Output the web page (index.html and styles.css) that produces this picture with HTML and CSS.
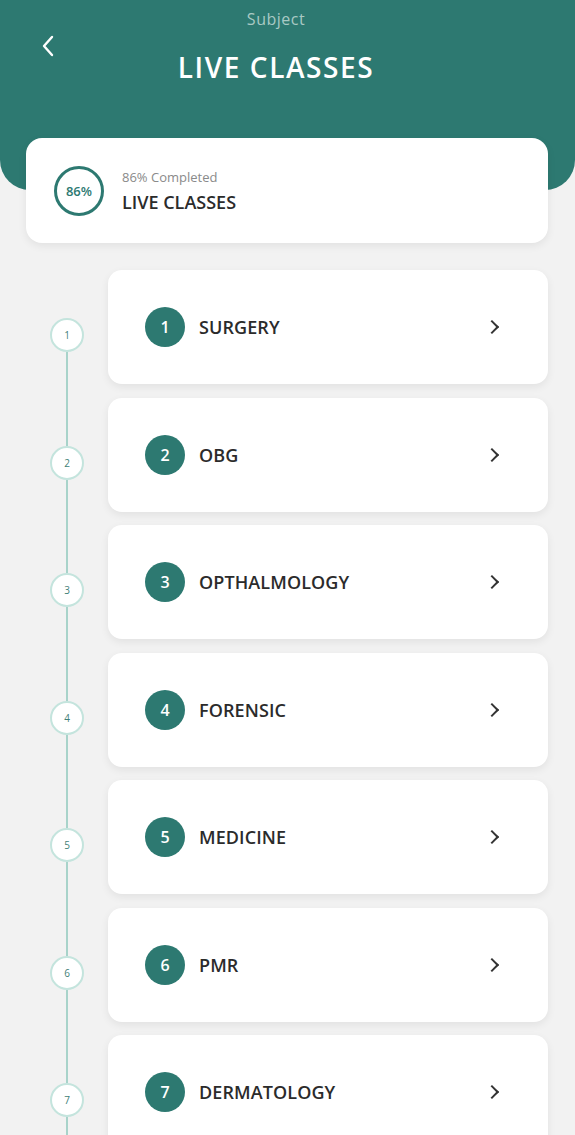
FILE: index.html
```html
<!DOCTYPE html>
<html lang="en">
<head>
    <meta charset="UTF-8">
    <meta name="viewport" content="width=device-width, initial-scale=1">
    <title>Live Classes</title>
    <link rel="stylesheet" href="styles.css">
</head>
<body>
    <div class="top">
        <div class="top_sub">Subject</div>
        <div class="top_row">
            <button type="button" class="button_back" aria-label="Back">
                <svg width="16" height="24" viewBox="0 0 16 24"><path d="M12 3 L4 12 L12 21" fill="none" stroke="#fff" stroke-width="2.4" stroke-linecap="round" stroke-linejoin="round"/></svg>
            </button>
            <h1 class="title">LIVE CLASSES</h1>
        </div>
    </div>

    <div class="summary">
        <div class="progress">86%</div>
        <div class="summary_text">
            <span class="summary_sub">86% Completed</span>
            <span class="summary_name">LIVE CLASSES</span>
        </div>
    </div>

    <ul class="list">
        <li class="row first">
            <div class="step"><span class="line"></span><span class="dot">1</span><span class="line"></span></div>
            <a class="item" href="#"><span class="badge">1</span><span class="name">SURGERY</span><span class="arrow"></span></a>
        </li>
        <li class="row">
            <div class="step"><span class="line"></span><span class="dot">2</span><span class="line"></span></div>
            <a class="item" href="#"><span class="badge">2</span><span class="name">OBG</span><span class="arrow"></span></a>
        </li>
        <li class="row">
            <div class="step"><span class="line"></span><span class="dot">3</span><span class="line"></span></div>
            <a class="item" href="#"><span class="badge">3</span><span class="name">OPTHALMOLOGY</span><span class="arrow"></span></a>
        </li>
        <li class="row">
            <div class="step"><span class="line"></span><span class="dot">4</span><span class="line"></span></div>
            <a class="item" href="#"><span class="badge">4</span><span class="name">FORENSIC</span><span class="arrow"></span></a>
        </li>
        <li class="row">
            <div class="step"><span class="line"></span><span class="dot">5</span><span class="line"></span></div>
            <a class="item" href="#"><span class="badge">5</span><span class="name">MEDICINE</span><span class="arrow"></span></a>
        </li>
        <li class="row">
            <div class="step"><span class="line"></span><span class="dot">6</span><span class="line"></span></div>
            <a class="item" href="#"><span class="badge">6</span><span class="name">PMR</span><span class="arrow"></span></a>
        </li>
        <li class="row">
            <div class="step"><span class="line"></span><span class="dot">7</span><span class="line"></span></div>
            <a class="item" href="#"><span class="badge">7</span><span class="name">DERMATOLOGY</span><span class="arrow"></span></a>
        </li>
    </ul>
</body>
</html>
```

FILE: styles.css
```css
body {
    margin: 0;
    background: #f2f2f2;
    font-family: "Open Sans", "Liberation Sans", sans-serif;
    color: #2b2b2b;
    overflow: hidden;
}

button {
    cursor: pointer;
}

.top {
    height: 190px;
    padding-right: 23px;
    background: #2d7971;
    border-radius: 0 0 30px 30px;
    color: #fff;
}

.top_sub {
    padding-top: 7px;
    text-align: center;
    font-size: 16px;
    line-height: 24px;
    letter-spacing: 0.5px;
    color: #a9c9c4;
}

.top_row {
    position: relative;
    height: 60px;
}

.button_back {
    position: absolute;
    top: 3px;
    left: 40px;
    padding: 0;
    border: 0;
    background: transparent;
}

.title {
    margin: 0;
    padding-top: 18px;
    text-align: center;
    font-size: 28px;
    font-weight: 600;
    line-height: 36px;
    letter-spacing: 1.6px;
}

.summary {
    display: flex;
    align-items: center;
    height: 105px;
    margin: -52px 27px 0 26px;
    padding: 0 0 0 28px;
    box-sizing: border-box;
    background: #fff;
    border-radius: 16px;
    box-shadow: 0 3px 8px rgba(0, 0, 0, 0.07);
}

.progress {
    width: 50px;
    height: 50px;
    box-sizing: border-box;
    border: 3px solid #2d7971;
    border-radius: 50%;
    display: flex;
    align-items: center;
    justify-content: center;
    font-size: 13px;
    font-weight: 600;
    color: #2d7971;
}

.summary_text {
    display: flex;
    flex-direction: column;
    margin-left: 18px;
}

.summary_sub {
    font-size: 13px;
    line-height: 18px;
    color: #8a8a8a;
}

.summary_name {
    margin-top: 4px;
    font-size: 18px;
    font-weight: 600;
    line-height: 24px;
    color: #2b2b2b;
}

.list {
    list-style: none;
    margin: 0;
    padding: 27px 27px 0 0;
}

.row {
    display: flex;
    height: 127.5px;
}

.step {
    display: flex;
    flex-direction: column;
    align-items: center;
    width: 34px;
    margin: 0 24px 0 50px;
}

.line {
    width: 2px;
    background: #a8d3ca;
}

.line:first-child {
    height: 48px;
}

.line:last-child {
    flex: 1;
}

.first .line:first-child {
    visibility: hidden;
}

.dot {
    width: 34px;
    height: 34px;
    box-sizing: border-box;
    border: 2px solid #c4e4dd;
    border-radius: 50%;
    background: #fff;
    display: flex;
    align-items: center;
    justify-content: center;
    font-size: 10px;
    color: #3f7f77;
}

.item {
    flex: 1;
    display: flex;
    align-items: center;
    height: 114px;
    padding: 0 51px 0 37px;
    box-sizing: border-box;
    background: #fff;
    border-radius: 14px;
    box-shadow: 0 3px 8px rgba(0, 0, 0, 0.07);
    text-decoration: none;
    color: #2b2b2b;
}

.badge {
    width: 40px;
    height: 40px;
    border-radius: 50%;
    background: #2d7971;
    color: #fff;
    display: flex;
    align-items: center;
    justify-content: center;
    font-size: 16px;
    font-weight: 600;
}

.name {
    flex: 1;
    margin-left: 14px;
    font-size: 18px;
    font-weight: 600;
    letter-spacing: 0.1px;
}

.arrow {
    width: 8px;
    height: 8px;
    border-top: 2.5px solid #333;
    border-right: 2.5px solid #333;
    transform: rotate(45deg);
}
```
